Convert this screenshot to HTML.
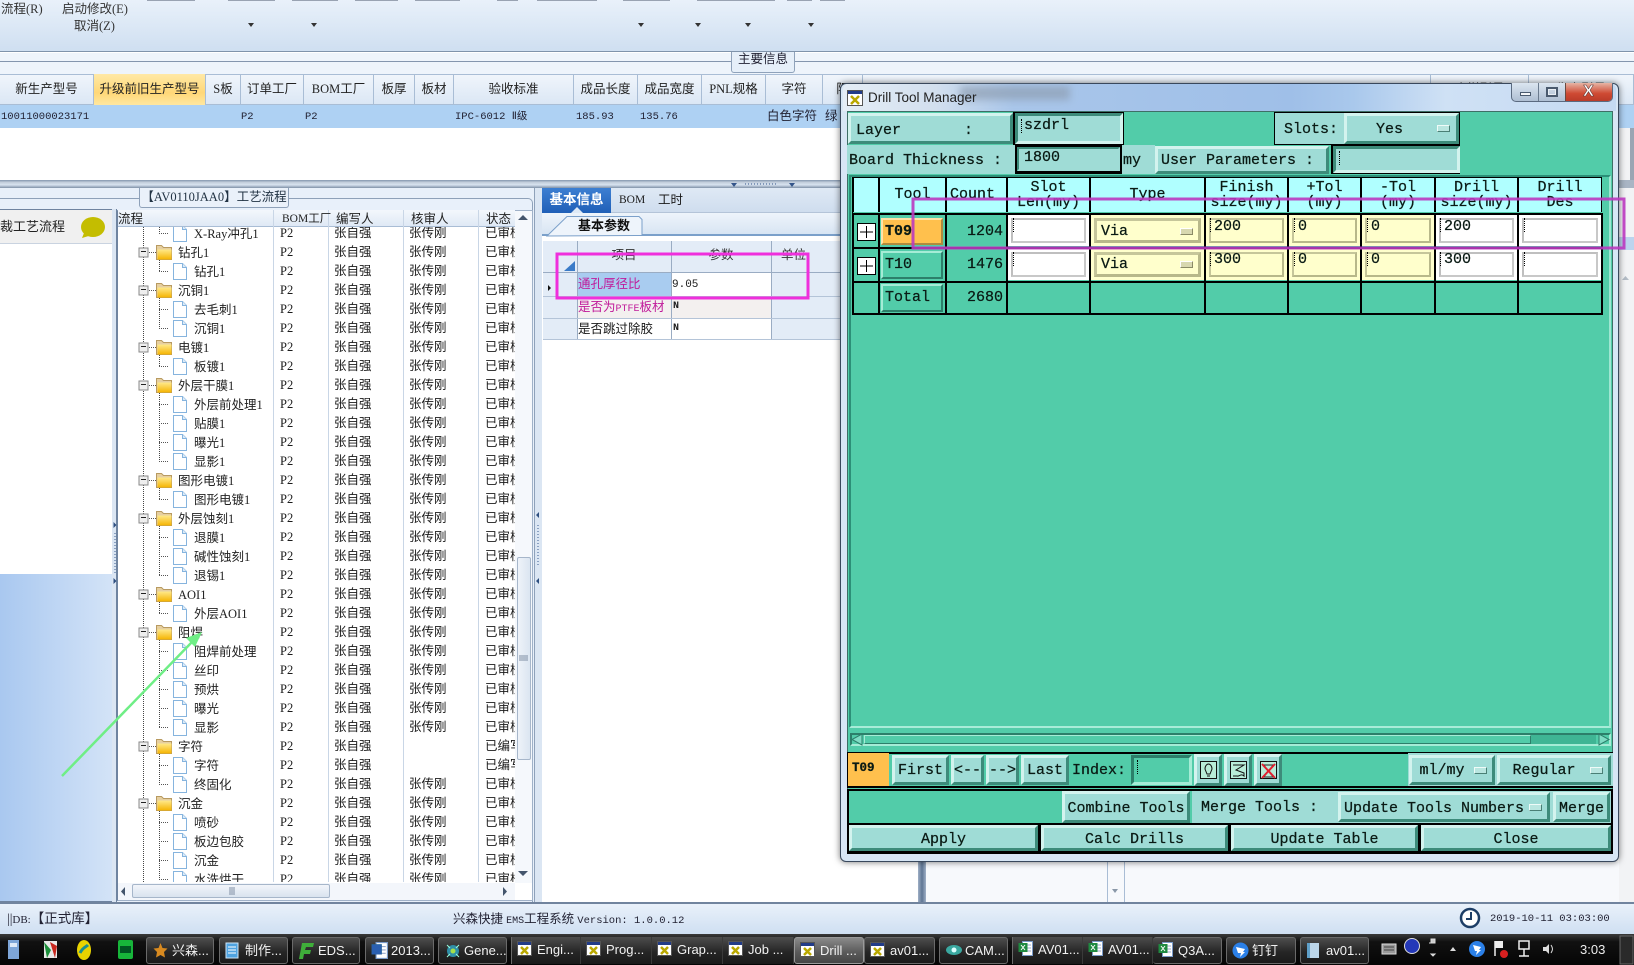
<!DOCTYPE html>
<html lang="zh"><head><meta charset="utf-8"><title>Drill Tool Manager</title>
<style>
html,body{margin:0;padding:0;width:1634px;height:965px;overflow:hidden;background:#fff}
*{box-sizing:border-box}
.a,.a *{position:absolute}
.a{left:0;top:0}
div,span{position:absolute;white-space:nowrap}
body{font:12.5px "Liberation Serif","WenQuanYi Zen Hei","Noto Sans CJK SC",sans-serif;color:#1a1a1a}
.hc{top:74px;height:31px;line-height:31px;text-align:center;border-right:1px solid #a9bdd5;font-size:12.5px;color:#222}
.dt{top:105px;height:23px;line-height:24px;font:10.5px/24px "Liberation Mono","WenQuanYi Zen Hei",monospace;color:#223}
.col{top:-3px;line-height:19px;font-size:12.5px}
.vl{top:210px;height:672px;width:1px;background:#c9d6e6}
.th{top:210px;height:17px;line-height:18px;font-size:12.5px;color:#222}
.m{font:15px "Liberation Mono",monospace;color:#0a1a14;-webkit-text-stroke:.25px #0a1a14}
.b{background:#9fdcd6;border:2px solid;border-color:#d3f3ee #3d8b7a #3d8b7a #d3f3ee;text-align:center}
.tb{background:#52cca9;border:2px solid;border-color:#a5ecd6 #2c7f6a #2c7f6a #a5ecd6}
.p{background:#9fdcd6}
.s{background:#9fdcd6;border:2px solid;border-color:#3d8b7a #d3f3ee #d3f3ee #3d8b7a}
.k{background:#000}
.h{background:#b0ffff;text-align:center;line-height:15px;overflow:hidden;top:178px;height:34px;padding-top:2px}
.c{height:31px}
.w{background:#fff}.y{background:#ffffcc}
.i{left:3px;top:3px;right:3px;bottom:3px;border:2px solid;}
.w .i{border-color:#bfbfbf #c8c8c8 #c8c8c8 #bfbfbf}
.y .i{border-color:#c6c69a #b8b88a #b8b88a #c6c69a}
.cur{width:3px;height:14px;border-left:1px dotted #000;top:3px;left:2px}
.ind{width:13px;height:7px;background:#b9e6e0;border:1px solid;border-color:#eefbf8 #4a7f75 #4a7f75 #eefbf8}
.tbtn{top:937px;height:27px;border:1px solid #6a6a6a;border-radius:3px;background:linear-gradient(#4d4d4d,#262626 55%,#1a1a1a);color:#f2f2f2;font:13px/26px "Liberation Sans","WenQuanYi Zen Hei",sans-serif;padding-left:25px;overflow:hidden}
.tbtn svg{position:absolute;left:5px;top:4px}
.grp{border:0;border-right:1px solid #3a3a3a;border-radius:0}
</style></head><body>
<svg width="0" height="0" style="position:absolute"><defs>
<linearGradient id="fg" x1="0" y1="0" x2="0" y2="1"><stop offset="0" stop-color="#ffe98a"/><stop offset="1" stop-color="#f5b400"/></linearGradient>
<g id="F"><rect x="139" y="-4" width="9" height="9" fill="#eee" stroke="#8a8a8a"/><path d="M141-.5h5" stroke="#222"/><path d="M149 .5h7" stroke="#555" stroke-dasharray="1 1"/><path d="M156.500-6.500h5l2 2h8v12h-15z" fill="#e6cfa0" stroke="#b89a60"/><path d="M157.500-2.500h14v10h-14z" fill="url(#fg)"/></g>
<g id="L"><path d="M159 .5h9" stroke="#555" stroke-dasharray="1 1"/><path d="M173.500-7.500h9l4 4v12h-13z" fill="#fff" stroke="#86b4de"/><path d="M182.500-7.500v4h4" fill="#dcebf8" stroke="#86b4de"/></g>
<g id="xi"><rect x=".5" y=".5" width="14" height="14" fill="#fff" stroke="#555"/><rect x="1" y="1" width="13" height="3" fill="#223c88"/><path d="M4 6l7 7M11 6l-7 7" stroke="#b9a800" stroke-width="2.500"/></g>
<g id="ei"><rect x="4.500" y=".5" width="10" height="14" fill="#fff" stroke="#7a9ac8"/><path d="M7 4h6M7 7h6M7 10h6" stroke="#9ac"/><rect x=".5" y="2" width="9" height="9" fill="#1f8a40"/><path d="M3 4l4 5M7 4l-4 5" stroke="#fff"/></g>
</defs></svg>

<!-- ribbon -->
<div style="left:0;top:0;width:1634px;height:52px;background:linear-gradient(#e9f1fa,#cfdff1);border-bottom:1px solid #7f93ab"></div>
<div style="left:147px;top:0;width:48px;height:1px;background:#99a3b2"></div><div style="left:228px;top:0;width:47px;height:1px;background:#99a3b2"></div><div style="left:292px;top:0;width:46px;height:1px;background:#99a3b2"></div><div style="left:355px;top:0;width:43px;height:1px;background:#99a3b2"></div><div style="left:415px;top:0;width:45px;height:1px;background:#99a3b2"></div><div style="left:497px;top:0;width:21px;height:1px;background:#99a3b2"></div><div style="left:537px;top:0;width:60px;height:1px;background:#99a3b2"></div><div style="left:623px;top:0;width:47px;height:1px;background:#99a3b2"></div><div style="left:697px;top:0;width:28px;height:1px;background:#99a3b2"></div><div style="left:725px;top:0;width:50px;height:1px;background:#99a3b2"></div><div style="left:787px;top:0;width:25px;height:1px;background:#99a3b2"></div><div style="left:820px;top:0;width:25px;height:1px;background:#99a3b2"></div>
<div style="left:1px;top:2px;line-height:15px;color:#333">流程(R)</div>
<div style="left:62px;top:2px;line-height:15px;color:#333">启动修改(E)</div>
<div style="left:74px;top:19px;line-height:15px;color:#333">取消(Z)</div>
<svg class="a" width="1634" height="52"><path d="M248 23h6l-3 4zM311 23h6l-3 4zM638 23h6l-3 4zM695 23h6l-3 4zM745 23h6l-3 4zM808 23h6l-3 4z" fill="#333"/></svg>

<!-- band -->
<div style="left:0;top:53px;width:1634px;height:21px;background:#eef4fb"></div>
<div style="left:0;top:61px;width:1634px;height:1px;background:#8496ae"></div>
<div style="left:731px;top:52px;width:64px;height:21px;background:#e6eff9;border:1px solid #8fa2ba;border-top:0;border-radius:0 0 3px 3px;text-align:center;line-height:14px;color:#223">主要信息</div>

<!-- grid header -->
<div style="left:0;top:74px;width:1634px;height:31px;background:linear-gradient(#f0f5fb,#dbe7f5);border-top:1px solid #a9bdd5;border-bottom:1px solid #a9bdd5"></div>
<div class="hc" style="left:0;width:94px">新生产型号</div>
<div class="hc" style="left:94px;width:112px;background:linear-gradient(#ffe9a6,#ffd777 60%,#ffe7a0)">升级前旧生产型号</div>
<div class="hc" style="left:206px;width:35px">S板</div>
<div class="hc" style="left:241px;width:63px">订单工厂</div>
<div class="hc" style="left:304px;width:70px">BOM工厂</div>
<div class="hc" style="left:374px;width:41px">板厚</div>
<div class="hc" style="left:415px;width:39px">板材</div>
<div class="hc" style="left:454px;width:120px">验收标准</div>
<div class="hc" style="left:574px;width:64px">成品长度</div>
<div class="hc" style="left:638px;width:64px">成品宽度</div>
<div class="hc" style="left:702px;width:64px">PNL规格</div>
<div class="hc" style="left:766px;width:57px">字符</div>
<div class="hc" style="left:823px;width:40px">阻</div>
<div class="hc" style="left:1430px;width:99px;border-left:1px solid #a9bdd5">合样型号</div>
<div class="hc" style="left:1529px;width:105px">生产型号</div>

<!-- data row -->
<div style="left:0;top:105px;width:1634px;height:23px;background:#aed1f3"></div>
<div class="dt" style="left:1px">10011000023171</div>
<div class="dt" style="left:241px">P2</div><div class="dt" style="left:305px">P2</div>
<div class="dt" style="left:455px">IPC-6012 Ⅱ级</div>
<div class="dt" style="left:576px">185.93</div><div class="dt" style="left:640px">135.76</div>
<div class="dt" style="left:767px;font-size:12.5px">白色字符</div><div class="dt" style="left:825px;font-size:12.5px">绿</div>

<!-- divider -->
<div style="left:0;top:180px;width:1634px;height:8px;background:linear-gradient(#8497ae,#c4cfdd 30%,#d7e2ef 60%,#7f91a8)"></div>
<svg class="a" style="top:180px" width="900" height="8"><path d="M731 3h6l-3 4zM789 3h6l-3 4z" fill="#34558a"/><path d="M745 4h32" stroke="#34558a" stroke-dasharray="1 2"/></svg>

<!-- left group -->
<div style="left:0;top:188px;width:540px;height:715px;background:#e8f0fa"></div>
<div style="left:0;top:198px;width:533px;height:705px;border-top:1px solid #8ea1b9;border-right:1px solid #8ea1b9;border-radius:0 5px 0 0"></div>
<div style="left:139px;top:188px;width:150px;height:20px;background:#eaf1fa;border:1px solid #8ea1b9;border-top:0;border-radius:0 0 3px 3px;text-align:center;line-height:18px;color:#234">【AV0110JAA0】工艺流程</div>

<!-- left subpanel -->
<div style="left:0;top:209px;width:113px;height:693px;border:1px solid #6f84a0;border-left:0;background:#fff"></div>
<div style="left:0;top:210px;width:112px;height:34px;background:#f0f0f0;border-bottom:1px solid #c9d3e0;line-height:34px;font-size:13px;color:#222">裁工艺流程</div>
<svg class="a" width="112" height="250" style="top:0"><ellipse cx="93" cy="227" rx="12" ry="10" fill="#c4bd00"/><path d="M84 233l-2 5 10-3z" fill="#c4bd00"/></svg>
<div style="left:0;top:574px;width:112px;height:327px;background:linear-gradient(90deg,#a9c8f0,#d3e3f7)"></div>
<div style="left:112px;top:209px;width:5px;height:693px;background:#dbe6f3;border-right:1px solid #6f84a0"></div>
<svg class="a" width="120" height="620"><path d="M113.500 522v6l3-3zM113.500 578v6l3-3z" fill="#2e4f80"/><path d="M115 533v40" stroke="#3a5c90" stroke-dasharray="1 2"/></svg>

<!-- tree grid -->
<div style="left:117px;top:210px;width:416px;height:691px;background:#fff;border:1px solid #9fb1c8;border-left:1px solid #6f84a0"></div>
<div style="left:118px;top:210px;width:397px;height:17px;background:linear-gradient(#f3f7fc,#dfe9f5);border-bottom:1px solid #a9bdd5"></div>
<div class="vl" style="left:273px"></div><div class="vl" style="left:328px"></div><div class="vl" style="left:403px"></div><div class="vl" style="left:478px"></div>
<div class="th" style="left:118px">流程</div><div class="th" style="left:282px;font-size:11.5px">BOM工厂</div><div class="th" style="left:336px">编写人</div><div class="th" style="left:411px">核审人</div><div class="th" style="left:486px">状态</div>

<svg class="a" style="left:117px;top:227px" width="156" height="655" viewBox="117 227 156 655" font-size="12.500" font-family="'Liberation Serif','WenQuanYi Zen Hei',sans-serif" fill="#222">
<path d="M143.500 227V882M159.500 227v6M159.500 252v19M159.500 290v38M159.500 347v19M159.500 385v76M159.500 480v19M159.500 518v57M159.500 594v19M159.500 632v95M159.500 746v38M159.500 803v76" stroke="#444" stroke-dasharray="1 1" fill="none"/>
<use href="#L" y="233"/><use href="#F" y="252"/><use href="#L" y="271"/><use href="#F" y="290"/><use href="#L" y="309"/><use href="#L" y="328"/><use href="#F" y="347"/><use href="#L" y="366"/><use href="#F" y="385"/><use href="#L" y="404"/><use href="#L" y="423"/><use href="#L" y="442"/><use href="#L" y="461"/><use href="#F" y="480"/><use href="#L" y="499"/><use href="#F" y="518"/><use href="#L" y="537"/><use href="#L" y="556"/><use href="#L" y="575"/><use href="#F" y="594"/><use href="#L" y="613"/><use href="#F" y="632"/><use href="#L" y="651"/><use href="#L" y="670"/><use href="#L" y="689"/><use href="#L" y="708"/><use href="#L" y="727"/><use href="#F" y="746"/><use href="#L" y="765"/><use href="#L" y="784"/><use href="#F" y="803"/><use href="#L" y="822"/><use href="#L" y="841"/><use href="#L" y="860"/><use href="#L" y="879"/>
<text x="194" y="238">X-Ray冲孔1</text>
<text x="178" y="257">钻孔1</text><text x="194" y="276">钻孔1</text>
<text x="178" y="295">沉铜1</text><text x="194" y="314">去毛刺1</text><text x="194" y="333">沉铜1</text>
<text x="178" y="352">电镀1</text><text x="194" y="371">板镀1</text>
<text x="178" y="390">外层干膜1</text><text x="194" y="409">外层前处理1</text><text x="194" y="428">贴膜1</text><text x="194" y="447">曝光1</text><text x="194" y="466">显影1</text>
<text x="178" y="485">图形电镀1</text><text x="194" y="504">图形电镀1</text>
<text x="178" y="523">外层蚀刻1</text><text x="194" y="542">退膜1</text><text x="194" y="561">碱性蚀刻1</text><text x="194" y="580">退锡1</text>
<text x="178" y="599">AOI1</text><text x="194" y="618">外层AOI1</text>
<text x="178" y="637">阻焊</text><text x="194" y="656">阻焊前处理</text><text x="194" y="675">丝印</text><text x="194" y="694">预烘</text><text x="194" y="713">曝光</text><text x="194" y="732">显影</text>
<text x="178" y="751">字符</text><text x="194" y="770">字符</text><text x="194" y="789">终固化</text>
<text x="178" y="808">沉金</text><text x="194" y="827">喷砂</text><text x="194" y="846">板边包胶</text><text x="194" y="865">沉金</text><text x="194" y="884">水洗烘干</text>
</svg>

<div style="left:280px;top:227px;width:40px;height:655px;overflow:hidden"><div class="col" style="left:0">P2<br>P2<br>P2<br>P2<br>P2<br>P2<br>P2<br>P2<br>P2<br>P2<br>P2<br>P2<br>P2<br>P2<br>P2<br>P2<br>P2<br>P2<br>P2<br>P2<br>P2<br>P2<br>P2<br>P2<br>P2<br>P2<br>P2<br>P2<br>P2<br>P2<br>P2<br>P2<br>P2<br>P2<br>P2</div></div>
<div style="left:334px;top:227px;width:60px;height:655px;overflow:hidden"><div class="col" style="left:0">张自强<br>张自强<br>张自强<br>张自强<br>张自强<br>张自强<br>张自强<br>张自强<br>张自强<br>张自强<br>张自强<br>张自强<br>张自强<br>张自强<br>张自强<br>张自强<br>张自强<br>张自强<br>张自强<br>张自强<br>张自强<br>张自强<br>张自强<br>张自强<br>张自强<br>张自强<br>张自强<br>张自强<br>张自强<br>张自强<br>张自强<br>张自强<br>张自强<br>张自强<br>张自强</div></div>
<div style="left:409px;top:227px;width:60px;height:655px;overflow:hidden"><div class="col" style="left:0">张传刚<br>张传刚<br>张传刚<br>张传刚<br>张传刚<br>张传刚<br>张传刚<br>张传刚<br>张传刚<br>张传刚<br>张传刚<br>张传刚<br>张传刚<br>张传刚<br>张传刚<br>张传刚<br>张传刚<br>张传刚<br>张传刚<br>张传刚<br>张传刚<br>张传刚<br>张传刚<br>张传刚<br>张传刚<br>张传刚<br>张传刚<br>&nbsp;<br>&nbsp;<br>张传刚<br>张传刚<br>张传刚<br>张传刚<br>张传刚<br>张传刚</div></div>
<div style="left:485px;top:227px;width:30px;height:655px;overflow:hidden"><div class="col" style="left:0">已审核<br>已审核<br>已审核<br>已审核<br>已审核<br>已审核<br>已审核<br>已审核<br>已审核<br>已审核<br>已审核<br>已审核<br>已审核<br>已审核<br>已审核<br>已审核<br>已审核<br>已审核<br>已审核<br>已审核<br>已审核<br>已审核<br>已审核<br>已审核<br>已审核<br>已审核<br>已审核<br>已编写<br>已编写<br>已审核<br>已审核<br>已审核<br>已审核<br>已审核<br>已审核</div></div>

<!-- tree scrollbars -->
<div style="left:515px;top:211px;width:17px;height:672px;background:#f5f8fc"></div>
<div style="left:517px;top:557px;width:14px;height:203px;background:linear-gradient(90deg,#eef3f9,#dbe5f1);border:1px solid #a6b6ca;border-radius:2px"></div>
<svg class="a" width="540" height="905"><path d="M518 220h10l-5-5zM518 871h10l-5 5z" fill="#44556c"/><path d="M519 656h9M519 658h9M519 660h9" stroke="#7d8da3"/></svg>
<div style="left:118px;top:883px;width:397px;height:17px;background:#f3f6fb"></div>
<div style="left:132px;top:884px;width:198px;height:14px;background:linear-gradient(#f2f5fa,#d9e3ef);border:1px solid #a6b6ca;border-radius:2px"></div>
<svg class="a" width="540" height="905"><path d="M125 887v9l-4-4.500zM503 887v9l4-4.500z" fill="#44556c"/><path d="M230 887v8M232 887v8M234 887v8" stroke="#7d8da3"/></svg>

<!-- right splitter -->
<div style="left:534px;top:188px;width:8px;height:714px;background:#dbe6f3;border-left:1px solid #8ea1b9"></div>
<svg class="a" width="545" height="620"><path d="M539 512v6l-3-3zM539 578v6l-3-3z" fill="#2e4f80"/><path d="M538 525v40" stroke="#3a5c90" stroke-dasharray="1 2"/></svg>

<!-- right panel -->
<div style="left:542px;top:188px;width:376px;height:714px;background:#fff"></div>
<div style="left:542px;top:188px;width:376px;height:25px;background:linear-gradient(#dfe9f5,#cfddee);border-bottom:1px solid #b4c4d8"></div>
<div style="left:542px;top:188px;width:69px;height:25px;background:linear-gradient(#3d7fd2,#1f5fb7);color:#fff;font-size:13.500px;font-weight:bold;text-align:center;line-height:24px">基本信息</div>
<svg class="a" width="620" height="216"><path d="M571 213l6-6 6 6z" fill="#dfeaf6"/></svg>
<div style="left:619px;top:188px;line-height:25px;font-size:11.500px">BOM</div><div style="left:658px;top:188px;line-height:25px">工时</div>
<div style="left:542px;top:213px;width:376px;height:23px;background:linear-gradient(#eef4fb,#d8e5f3);border-bottom:2px solid #7ba0ca"></div>
<svg class="a" width="660" height="240"><path d="M547 236l20-19.500h72l3 3v16z" fill="#eef4fb" stroke="#7ba0ca"/></svg>
<div style="left:578px;top:216px;line-height:20px;font-weight:bold;font-size:13px;color:#111">基本参数</div>
<div style="left:543px;top:241px;width:375px;height:98px;background:#e3ecf7"></div>
<div style="left:543px;top:241px;width:375px;height:32px;background:#e3ecf7;border-bottom:1px solid #9aacc3"></div>
<div style="left:577px;top:273px;width:94px;height:23px;background:#a9ccf0;color:#c01a9a;line-height:23px;padding-left:1px">通孔厚径比</div>
<div style="left:671px;top:273px;width:100px;height:23px;background:#fff;font:11px/24px 'Liberation Mono',monospace;padding-left:1px">9.05</div>
<div style="left:577px;top:296px;width:94px;height:22px;background:#f3f0ef;color:#c01a9a;line-height:22px;padding-left:1px">是否为<span style="position:static;font:10px 'Liberation Mono',monospace">PTFE</span>板材</div>
<div style="left:671px;top:296px;width:100px;height:22px;background:#f3f0ef;font:bold 10px/22px 'Liberation Mono',monospace;padding-left:2px">N</div>
<div style="left:577px;top:318px;width:94px;height:22px;background:#fff;line-height:22px;padding-left:1px">是否跳过除胶</div>
<div style="left:671px;top:318px;width:100px;height:22px;background:#fff;font:bold 10px/22px 'Liberation Mono',monospace;padding-left:2px">N</div>
<div style="left:577px;top:241px;width:94px;height:32px;text-align:center;line-height:28px;color:#333">项目</div>
<div style="left:671px;top:241px;width:100px;height:32px;text-align:center;line-height:28px;color:#333">参数</div>
<div style="left:771px;top:241px;width:69px;height:99px;border-left:1px solid #9aacc3;padding-left:9px;line-height:28px;color:#333">单位</div>
<div style="left:577px;top:241px;width:1px;height:99px;background:#9aacc3"></div><div style="left:671px;top:241px;width:1px;height:99px;background:#9aacc3"></div>
<div style="left:543px;top:296px;width:375px;height:1px;background:#b4c4d8"></div><div style="left:543px;top:318px;width:375px;height:1px;background:#b4c4d8"></div><div style="left:543px;top:339px;width:375px;height:1px;background:#b4c4d8"></div>
<svg class="a" width="580" height="300"><path d="M575 261v10h-11z" fill="#3a7bc8"/><path d="M548 285v6l3-3z" fill="#111"/></svg>

<div style="left:918px;top:862px;width:8px;height:40px;background:linear-gradient(90deg,#9fb0c6,#5f7694,#9fb0c6)"></div>
<div style="left:926px;top:862px;width:708px;height:40px;background:#f7f9fc"></div>
<div style="left:1107px;top:862px;width:1px;height:40px;background:#a9bdd5"></div><div style="left:1124px;top:862px;width:1px;height:40px;background:#a9bdd5"></div>
<svg class="a" width="1634" height="905"><path d="M1112 889h6l-3 4zM1622 889h6l-3 4z" fill="#8a98a8"/></svg>
<div style="left:1619px;top:128px;width:15px;height:774px;background:#f2f3f5"></div>
<div style="left:1619px;top:180px;width:15px;height:8px;background:#a9b5c4"></div>
<div style="left:1619px;top:237px;width:15px;height:13px;background:#bcd4ee"></div>
<div style="left:1630px;top:128px;width:4px;height:52px;background:#9aa5b3"></div>
<svg class="a" width="1634" height="300"><path d="M1622 280h7l-3.500-4z" fill="#b3bcc6"/></svg>

<!-- status bar -->
<div style="left:0;top:902px;width:1634px;height:32px;background:linear-gradient(#e9f1fa,#cfdff2);border-top:2px solid #71849e"></div>
<div style="left:7px;top:911px;line-height:16px;color:#223;font-size:13.500px">||<span style="position:static;font-size:11px">DB:</span>【正式库】</div>
<div style="left:453px;top:911px;line-height:16px;color:#223">兴森快捷 <span style="position:static;font:10px 'Liberation Mono',monospace">EMS</span>工程系统 <span style="position:static;font:10.500px 'Liberation Mono',monospace">Version: 1.0.0.12</span></div>
<svg class="a" width="1500" height="935"><circle cx="1470" cy="918" r="9" fill="#fff" stroke="#1d3e66" stroke-width="2.500"/><path d="M1471 912v7h-5" stroke="#1d3e66" stroke-width="2" fill="none"/></svg>
<div style="left:1490px;top:911px;font:10.500px/16px 'Liberation Mono',monospace;color:#223">2019-10-11 03:03:00</div>

<!-- taskbar -->
<div style="left:0;top:934px;width:1634px;height:31px;background:linear-gradient(#3a3a3a,#111 25%,#050505)"></div>
<svg class="a" style="top:934px" width="145" height="31">
<rect x="8" y="6" width="11" height="19" fill="#7ea6d8"/><rect x="10" y="9" width="7" height="4" fill="#dfeaf8"/>
<path d="M44 7h13v17H44z" fill="#e8e8e8"/><path d="M44 8l7 8-4 8z" fill="#1b8f3a"/><path d="M50 8l7 4-2 12z" fill="#c8281f"/>
<ellipse cx="84" cy="16" rx="7" ry="10" fill="#e8d300"/><path d="M80 19c3-6 6-6 8-8" stroke="#1a8f8f" stroke-width="3" fill="none"/>
<rect x="118" y="6" width="15" height="19" rx="2" fill="#17b53a"/><rect x="120" y="12" width="11" height="7" fill="#052"/>
</svg>
<div class="tbtn" style="left:146px;width:68px">兴森...<svg width="17" height="17" viewBox="0 0 17 17"><path d="M8.500 1l2 5 5 .5-3.500 3.500 1 5.500-4.500-2.500-4.500 2.500 1-5.500L1.500 6.500l5-.5z" fill="#d88a20"/></svg></div>
<div class="tbtn" style="left:219px;width:69px">制作...<svg width="15" height="17" viewBox="0 0 15 17"><rect x="1" y="1" width="12" height="15" fill="#4fa3e0" stroke="#cfe6f8"/><path d="M3 5h8M3 8h8M3 11h8" stroke="#fff"/></svg></div>
<div class="tbtn" style="left:292px;width:68px">EDS...<svg width="17" height="18" viewBox="0 0 17 18"><path d="M4 1h12l-1 4H8l-1 3h6l-1 4H6l-1 5H1z" fill="#3fae3a"/></svg></div>
<div class="tbtn" style="left:365px;width:69px">2013...<svg width="17" height="17" viewBox="0 0 15 15"><use href="#ei"/><rect x=".5" y="2" width="9" height="9" fill="#2a5fb0"/></svg></div>
<div class="tbtn" style="left:438px;width:69px">Gene...<svg width="18" height="18" viewBox="0 0 18 18"><circle cx="9" cy="9" r="6" fill="#2f8fa8"/><circle cx="9" cy="9" r="2.500" fill="#a6e04a"/><path d="M3 3l3 3M15 3l-3 3M3 15l3-3M15 15l-3-3" stroke="#9fd"/></svg></div>
<div class="tbtn grp" style="left:511px;width:70px;border-left:1px solid #6a6a6a">Engi...<svg width="15" height="15"><use href="#xi"/></svg></div>
<div class="tbtn grp" style="left:581px;width:71px">Prog...<svg width="15" height="15"><use href="#xi"/></svg></div>
<div class="tbtn grp" style="left:652px;width:71px">Grap...<svg width="15" height="15"><use href="#xi"/></svg></div>
<div class="tbtn grp" style="left:723px;width:71px">Job ...<svg width="15" height="15"><use href="#xi"/></svg></div>
<div class="tbtn" style="left:794px;width:70px;background:linear-gradient(#8a8a8a,#5c5c5c 55%,#444);border-color:#9a9a9a">Drill ...<svg width="15" height="15"><use href="#xi"/></svg></div>
<div class="tbtn" style="left:864px;width:71px">av01...<svg width="15" height="15"><use href="#xi"/></svg></div>
<div class="tbtn" style="left:939px;width:69px">CAM...<svg width="18" height="15" viewBox="0 0 18 15"><ellipse cx="9" cy="8" rx="8" ry="5" fill="#3aa8a0"/><circle cx="9" cy="8" r="2.500" fill="#dff"/></svg></div>
<div class="tbtn grp" style="left:1012px;width:71px;border-left:1px solid #6a6a6a">AV01...<svg width="15" height="15"><use href="#ei"/></svg></div>
<div class="tbtn grp" style="left:1083px;width:70px">AV01...<svg width="15" height="15"><use href="#ei"/></svg></div>
<div class="tbtn" style="left:1153px;width:69px;border-left:0">Q3A...<svg width="15" height="15"><use href="#ei"/></svg></div>
<div class="tbtn" style="left:1226px;width:70px">钉钉<svg width="17" height="17" viewBox="0 0 17 17"><circle cx="8.500" cy="8.500" r="8" fill="#2b80e8"/><path d="M4 5l9 2-2 3h2l-5 5 1-4H6z" fill="#fff"/></svg></div>
<div class="tbtn" style="left:1300px;width:69px">av01...<svg width="15" height="17" viewBox="0 0 15 17"><rect x="1" y="1" width="12" height="15" fill="#bcd6ea"/><rect x="1" y="1" width="3" height="15" fill="#5f9fc8"/></svg></div>
<svg class="a" style="top:934px" width="1634" height="31">
<rect x="1382" y="10" width="14" height="10" fill="#999" stroke="#ddd"/><path d="M1384 13h10M1384 16h10" stroke="#444"/>
<circle cx="1412" cy="12" r="7.500" fill="#2438b8" stroke="#ddd"/>
<path d="M1429 9h6v-4h-4v4M1431 20l2 2 2-2z" stroke="#ddd" fill="#ccc"/>
<path d="M1450 17l3-4 3 4z" fill="#ddd"/>
<circle cx="1477" cy="15" r="8" fill="#2b80e8"/><path d="M1473 11l8 2-2 3h2l-5 5 1-4h-2z" fill="#fff"/>
<path d="M1495 7v15" stroke="#eee" stroke-width="1.500"/><path d="M1495 7h8v7h-8z" fill="#eee"/><circle cx="1504" cy="20" r="4" fill="#d82020"/>
<rect x="1519" y="7" width="10" height="8" fill="none" stroke="#eee" stroke-width="1.500"/><path d="M1524 15v7M1519 22h10" stroke="#eee" stroke-width="1.500"/>
<path d="M1543 13h3l3-3v10l-3-3h-3z" fill="#ddd"/><path d="M1551 11c2 3 2 5 0 8" stroke="#ddd" fill="none"/>
<rect x="1620" y="2" width="13" height="28" fill="#2a2a2a" stroke="#666"/>
</svg>
<div style="left:1580px;top:934px;font:13px/31px 'Liberation Sans',sans-serif;color:#eee">3:03</div>

<!-- window frame -->
<div style="left:840px;top:83px;width:779px;height:779px;background:#d7e6f5;border:1px solid #39485c;border-radius:6px;box-shadow:0 0 7px rgba(0,0,0,.55)"></div>
<div style="left:843px;top:84px;width:773px;height:27px;border-radius:5px 5px 0 0;background:linear-gradient(90deg,#e4edf6 0%,#d2dfee 12%,#a9c6ea 22%,#9fbfe8 58%,#a9c8ec 66%,#cfe1f5 78%,#c5daf2 100%)"></div>
<div style="left:960px;top:86px;width:110px;height:14px;background:#8e9eb2;filter:blur(4px);opacity:.7"></div>
<svg class="a" style="left:847px;top:90px" width="16" height="16"><rect x=".5" y=".5" width="15" height="15" fill="#fff" stroke="#555"/><rect x="1" y="1" width="14" height="3" fill="#223c88"/><path d="M4 6l8 8M12 6l-8 8" stroke="#b9a800" stroke-width="2.500"/></svg>
<div style="left:868px;top:89px;font:13.500px/17px 'Liberation Sans',sans-serif;color:#222">Drill Tool Manager</div>
<div style="left:1511px;top:83px;width:102px;height:19px;border:1px solid #5a6a80;border-top:0;border-radius:0 0 5px 5px;background:linear-gradient(#dbe5f0,#aebfd3);overflow:hidden">
<div style="left:26px;top:0;width:1px;height:19px;background:#6a7a8e"></div><div style="left:53px;top:0;width:47px;height:19px;background:linear-gradient(#e6b4a4,#cf4a33 55%,#b73a28);border-left:1px solid #6a4a40"></div>
<div style="left:8px;top:9px;width:11px;height:4px;background:#f4f6f8;border:1px solid #4a5a6e"></div>
<div style="left:34px;top:4px;width:12px;height:10px;background:none;border:2px solid #4a5a6e;box-shadow:inset 0 0 0 1px #e8eef4"></div>
<div style="left:53px;top:0;width:47px;text-align:center;font:bold 16px/18px 'Liberation Sans',sans-serif;color:#fff;-webkit-text-stroke:.5px #533">X</div>
</div>

<!-- client -->
<div style="left:847px;top:111px;width:766px;height:743px;background:#52cca9;border:1px solid #3e6f66"></div>

<!-- row 1 -->
<div class="k" style="left:1013px;top:112px;width:111px;height:33px"></div>
<div class="k" style="left:1274px;top:112px;width:186px;height:33px"></div>
<div class="b m" style="left:848px;top:113px;width:165px;height:31px;line-height:29px;text-align:left;padding-left:5px;white-space:pre;background:#9fdcd6;border-width:3px">Layer       :</div>
<div class="s m" style="left:1015px;top:113px;width:108px;height:31px;border-width:3px;background:#9fdcd6"><span style="left:6px;top:1px;line-height:18px">szdrl</span><span class="cur" style="left:3px"></span></div>
<div class="p m" style="left:1275px;top:113px;width:69px;height:31px;line-height:34px;padding-left:9px">Slots:</div>
<div class="b m" style="left:1344px;top:113px;width:115px;height:31px;line-height:27px;border-width:3px;padding-right:24px">Yes<span class="ind" style="right:6px;top:9px"></span></div>
<!-- row 2 -->
<div class="p m" style="left:847px;top:145px;width:168px;height:29px;line-height:32px;padding-left:2px">Board Thickness :</div>
<div class="k" style="left:1015px;top:145px;width:107px;height:29px"></div>
<div class="s m" style="left:1017px;top:147px;width:103px;height:24px;background:#9fdcd6;border:2px solid;border-color:#3d8b7a #9fdcd6 #9fdcd6 #3d8b7a"><span style="left:5px;top:0;line-height:18px">1800</span></div>
<div class="p m" style="left:1122px;top:145px;width:33px;height:29px;line-height:32px;padding-left:1px">my</div>
<div class="b m" style="left:1155px;top:146px;width:174px;height:28px;line-height:24px;border-width:3px;text-align:left;padding-left:3px">User Parameters :</div>
<div class="k" style="left:1331px;top:145px;width:129px;height:29px"></div>
<div class="s" style="left:1333px;top:146px;width:127px;height:27px;background:#9fdcd6;border-width:3px"><span class="cur" style="left:3px;top:2px"></span></div>

<!-- table header -->
<div class="k" style="left:852px;top:176px;width:750px;height:138px"></div>
<div style="left:853px;top:212px;width:749px;height:1px;background:#52cca9"></div>
<div class="h m" style="left:854px;width:24px"></div>
<div class="h m" style="left:880px;width:65px;line-height:30px">Tool</div>
<div class="h m" style="left:947px;width:59px;line-height:30px;text-align:left;padding-left:3px">Count</div>
<div class="h m" style="left:1008px;width:81px">Slot<br>Len(my)</div>
<div class="h m" style="left:1091px;width:113px;line-height:30px">Type</div>
<div class="h m" style="left:1206px;width:81px">Finish<br>size(my)</div>
<div class="h m" style="left:1289px;width:71px">+Tol<br>(my)</div>
<div class="h m" style="left:1362px;width:72px">-Tol<br>(my)</div>
<div class="h m" style="left:1436px;width:81px">Drill<br>size(my)</div>
<div class="h m" style="left:1519px;width:82px">Drill<br>Des</div>

<!-- table body backgrounds -->
<div style="left:854px;top:215px;width:748px;height:98px;background:#52cca9"></div>
<div class="k" style="left:852px;top:213px;width:750px;height:2px"></div>
<div class="k" style="left:852px;top:247px;width:750px;height:2px"></div>
<div class="k" style="left:852px;top:281px;width:750px;height:2px"></div>
<div class="k" style="left:852px;top:313px;width:750px;height:2px"></div>
<div class="k" style="left:852px;top:213px;width:2px;height:102px"></div>
<div class="k" style="left:878px;top:213px;width:2px;height:102px"></div><div class="k" style="left:945px;top:213px;width:2px;height:102px"></div><div class="k" style="left:1006px;top:213px;width:2px;height:102px"></div><div class="k" style="left:1089px;top:213px;width:2px;height:102px"></div><div class="k" style="left:1204px;top:213px;width:2px;height:102px"></div><div class="k" style="left:1287px;top:213px;width:2px;height:102px"></div><div class="k" style="left:1360px;top:213px;width:2px;height:102px"></div><div class="k" style="left:1434px;top:213px;width:2px;height:102px"></div><div class="k" style="left:1517px;top:213px;width:2px;height:102px"></div><div class="k" style="left:1601px;top:213px;width:2px;height:102px"></div>

<!-- plus boxes -->
<svg class="a" width="880" height="280"><rect x="857.500" y="223.500" width="18" height="17" fill="#fff" stroke="#000"/><path d="M866.500 226v12M860 232h13" stroke="#000"/><rect x="857.500" y="257.500" width="18" height="17" fill="#fff" stroke="#000"/><path d="M866.500 260v12M860 266h13" stroke="#000"/></svg>

<div class="tb m" style="left:881px;top:218px;width:62px;height:27px;background:#ffc04d;border-color:#ffe3a8 #b08a3e #b08a3e #ffe3a8;line-height:23px;padding-left:2px;font-weight:bold">T09</div>
<div class="tb m" style="left:881px;top:251px;width:62px;height:28px;line-height:24px;padding-left:2px">T10</div>
<div class="tb m" style="left:881px;top:284px;width:62px;height:28px;line-height:24px;padding-left:2px">Total</div>
<div class="m" style="left:947px;top:215px;width:56px;text-align:right;line-height:33px">1204</div>
<div class="m" style="left:947px;top:249px;width:56px;text-align:right;line-height:31px">1476</div>
<div class="m" style="left:947px;top:283px;width:56px;text-align:right;line-height:30px">2680</div>

<!-- row T09 cells -->
<div class="c w" style="left:1008px;top:215px;width:81px"><div class="i"></div><span class="cur" style="left:5px"></span></div>
<div class="c y m" style="left:1091px;top:215px;width:113px"><div class="i" style="background:#ffffcc;border-width:3px"></div><span style="left:10px;top:8px;line-height:17px">Via</span><span class="ind" style="right:11px;top:13px;background:#d8d8b0;border-color:#fff #8a8a66 #8a8a66 #fff"></span></div>
<div class="c y m" style="left:1206px;top:215px;width:81px"><div class="i"></div><span class="cur" style="left:4px"></span><span style="left:8px;top:3px;line-height:18px">200</span></div>
<div class="c y m" style="left:1289px;top:215px;width:71px"><div class="i"></div><span class="cur" style="left:5px"></span><span style="left:9px;top:3px;line-height:18px">0</span></div>
<div class="c y m" style="left:1362px;top:215px;width:72px"><div class="i"></div><span class="cur" style="left:5px"></span><span style="left:9px;top:3px;line-height:18px">0</span></div>
<div class="c w m" style="left:1436px;top:215px;width:81px"><div class="i"></div><span class="cur" style="left:4px"></span><span style="left:8px;top:3px;line-height:18px">200</span></div>
<div class="c w" style="left:1519px;top:215px;width:82px"><div class="i"></div><span class="cur" style="left:5px"></span></div>
<!-- row T10 cells -->
<div class="c w" style="left:1008px;top:249px;width:81px"><div class="i"></div><span class="cur" style="left:5px"></span></div>
<div class="c y m" style="left:1091px;top:249px;width:113px"><div class="i" style="background:#ffffcc;border-width:3px"></div><span style="left:10px;top:7px;line-height:17px">Via</span><span class="ind" style="right:11px;top:12px;background:#d8d8b0;border-color:#fff #8a8a66 #8a8a66 #fff"></span></div>
<div class="c y m" style="left:1206px;top:249px;width:81px"><div class="i"></div><span class="cur" style="left:4px"></span><span style="left:8px;top:2px;line-height:18px">300</span></div>
<div class="c y m" style="left:1289px;top:249px;width:71px"><div class="i"></div><span class="cur" style="left:5px"></span><span style="left:9px;top:2px;line-height:18px">0</span></div>
<div class="c y m" style="left:1362px;top:249px;width:72px"><div class="i"></div><span class="cur" style="left:5px"></span><span style="left:9px;top:2px;line-height:18px">0</span></div>
<div class="c w m" style="left:1436px;top:249px;width:81px"><div class="i"></div><span class="cur" style="left:4px"></span><span style="left:8px;top:2px;line-height:18px">300</span></div>
<div class="c w" style="left:1519px;top:249px;width:82px"><div class="i"></div><span class="cur" style="left:5px"></span></div>

<!-- edge & scroll -->
<div style="left:849px;top:175px;width:762px;height:553px;border:2px solid;border-color:#2c8f78 #9fe6d2 #a8ecd8 #2c8f78"></div>
<div style="left:850px;top:733px;width:761px;height:13px;background:#52cca9;border:2px solid;border-color:#2c7f6a #a5ecd6 #a5ecd6 #2c7f6a"></div>
<div style="left:864px;top:735px;width:667px;height:9px;background:#52cca9;border:1px solid;border-color:#a5ecd6 #2c7f6a #2c7f6a #a5ecd6"></div>
<div style="left:1531px;top:735px;width:65px;height:9px;background:#3fb594"></div>
<svg class="a" width="1620" height="750"><path d="M862 734v11l-10-5.500zM1599 734v11l10-5.500z" fill="#7fdcc4" stroke="#2c7f6a"/></svg>

<!-- nav row -->
<div class="k" style="left:847px;top:752px;width:766px;height:36px"></div>
<div style="left:849px;top:754px;width:762px;height:32px;background:#52cca9"></div>
<div class="m" style="left:848px;top:753px;width:41px;height:33px;background:#ffc04d;line-height:30px;padding-left:4px;font-size:12.500px;font-weight:bold">T09</div>
<div class="b m" style="left:892px;top:755px;width:57px;height:30px;line-height:25px;border-width:3px">First</div>
<div class="b m" style="left:951px;top:755px;width:33px;height:30px;line-height:25px;border-width:3px">&lt;--</div>
<div class="b m" style="left:986px;top:755px;width:33px;height:30px;line-height:25px;border-width:3px">--&gt;</div>
<div class="b m" style="left:1021px;top:755px;width:48px;height:30px;line-height:25px;border-width:3px">Last</div>
<div class="m" style="left:1072px;top:754px;line-height:33px">Index:</div>
<div class="tb" style="left:1131px;top:755px;width:61px;height:30px;border-color:#2c7f6a #a5ecd6 #a5ecd6 #2c7f6a;border-width:3px"><span class="cur" style="left:3px;top:2px"></span></div>
<div class="b" style="left:1194px;top:754px;width:28px;height:32px;border-width:3px"></div>
<div class="b" style="left:1224px;top:754px;width:28px;height:32px;border-width:3px"></div>
<div class="b" style="left:1254px;top:754px;width:28px;height:32px;border-width:3px"></div>
<svg class="a" width="1290" height="790" fill="none" stroke="#111"><rect x="1200.500" y="761.500" width="16" height="17" fill="#b8ecd8"/><path d="M1205 769a3.500 5 0 1 1 7 0l-2 5h-3zM1207 776h3"/><rect x="1230.500" y="761.500" width="16" height="17" fill="#b8ecd8"/><path d="M1233 765h11l-8 5 8 3v3c-3-3-5 1-7 0l-4 0"/><rect x="1260.500" y="761.500" width="16" height="17" fill="#b8ecd8"/><path d="M1264 765h9l-4 6 4 6h-9l4-6z" stroke="#222"/><path d="M1262 764l13 14M1275 764l-13 14" stroke="#e02030" stroke-width="2"/></svg>
<div class="p" style="left:1408px;top:753px;width:205px;height:33px"></div>
<div class="b m" style="left:1409px;top:755px;width:86px;height:30px;line-height:25px;border-width:3px;padding-right:20px">ml/my<span class="ind" style="right:5px;top:9px"></span></div>
<div class="b m" style="left:1497px;top:755px;width:114px;height:30px;line-height:25px;border-width:3px;padding-right:20px">Regular<span class="ind" style="right:5px;top:9px"></span></div>

<!-- merge row -->
<div class="k" style="left:847px;top:789px;width:766px;height:2px"></div>
<div class="k" style="left:847px;top:789px;width:2px;height:64px"></div><div class="k" style="left:1611px;top:789px;width:2px;height:64px"></div>
<div class="k" style="left:847px;top:823px;width:766px;height:2px"></div>
<div class="b m" style="left:1062px;top:791px;width:128px;height:32px;line-height:30px;border-width:3px">Combine Tools</div>
<div class="p m" style="left:1192px;top:791px;width:419px;height:32px;line-height:33px;padding-left:9px">Merge Tools :</div>
<div class="b m" style="left:1338px;top:792px;width:212px;height:30px;line-height:28px;border-width:3px;text-align:left;padding-left:3px">Update Tools Numbers<span class="ind" style="right:5px;top:9px"></span></div>
<div class="b m" style="left:1553px;top:792px;width:57px;height:30px;line-height:28px;border-width:3px">Merge</div>

<!-- action row -->
<div class="k" style="left:847px;top:851px;width:766px;height:3px"></div>
<div class="k" style="left:1038px;top:825px;width:3px;height:27px"></div><div class="k" style="left:1228px;top:825px;width:3px;height:27px"></div><div class="k" style="left:1418px;top:825px;width:3px;height:27px"></div>
<div class="b m" style="left:849px;top:825px;width:189px;height:26px;line-height:24px;border-width:3px">Apply</div>
<div class="b m" style="left:1041px;top:825px;width:187px;height:26px;line-height:24px;border-width:3px">Calc Drills</div>
<div class="b m" style="left:1231px;top:825px;width:187px;height:26px;line-height:24px;border-width:3px">Update Table</div>
<div class="b m" style="left:1421px;top:825px;width:190px;height:26px;line-height:24px;border-width:3px">Close</div>

<!-- annotations -->
<svg class="a" width="1634" height="965" fill="none">
<rect x="913" y="199" width="711" height="49" stroke="#bb38c0" stroke-width="3" opacity=".9"/>
<rect x="557" y="254" width="251" height="44" stroke="#ef2fdc" stroke-width="3"/>
<path d="M62 776L192 642" stroke="#6fee86" stroke-width="2.500"/>
<path d="M202 632l-16 6 9 9z" fill="#6fee86"/>
</svg>
</body></html>
